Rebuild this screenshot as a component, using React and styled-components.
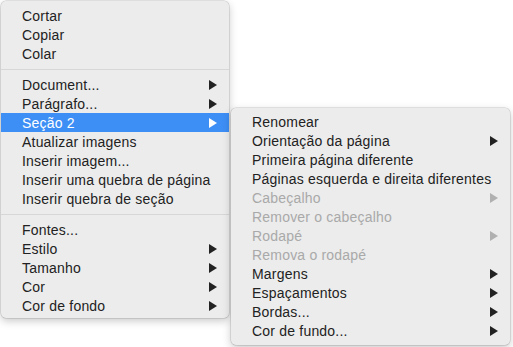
import React from "react";
import styled, { createGlobalStyle } from "styled-components";

const Global = createGlobalStyle`
  html, body { margin: 0; padding: 0; background: #ffffff; }
  body { font-family: "Liberation Sans", Arial, sans-serif; }
`;

const Stage = styled.div`
  display: flex;
  align-items: flex-start;
  gap: 2px;
  padding: 1px 0 0 1px;
  width: 513px;
  height: 347px;
  box-sizing: border-box;
  overflow: hidden;
`;

const Menu = styled.div`
  position: relative;
  z-index: ${(p) => (p.$sub ? 2 : 1)};
  width: ${(p) => p.$w}px;
  margin-top: ${(p) => p.$top || 0}px;
  padding: ${(p) => p.$pt}px 0 ${(p) => p.$pb}px;
  box-sizing: border-box;
  background: #ececec;
  border-radius: 5px;
  box-shadow: 0 0 0 0.5px rgba(0, 0, 0, 0.18), 0 3px 9px rgba(0, 0, 0, 0.22);
`;

const Item = styled.div`
  display: flex;
  align-items: center;
  justify-content: space-between;
  height: 19px;
  padding: 0 12px 0 21px;
  font-size: 14px;
  letter-spacing: 0.2px;
  line-height: 18px;
  white-space: nowrap;
  color: ${(p) => (p.$active ? "#ffffff" : p.$disabled ? "#a9a9a9" : "#222222")};
  background: ${(p) => (p.$active ? "#3d8ef5" : "transparent")};
`;

const Separator = styled.div`
  height: 1px;
  margin: 6px 0 5px;
  background: #d7d7d7;
`;

const Arrow = ({ color }) => (
  <svg width="8" height="10" viewBox="0 0 8 10">
    <polygon points="0,0 8,5 0,10" fill={color} />
  </svg>
);

const main = [
  ["Cortar"],
  ["Copiar"],
  ["Colar"],
  "sep",
  ["Document...", true],
  ["Parágrafo...", true],
  ["Seção 2", true, "active"],
  ["Atualizar imagens"],
  ["Inserir imagem..."],
  ["Inserir uma quebra de página"],
  ["Inserir quebra de seção"],
  "sep",
  ["Fontes..."],
  ["Estilo", true],
  ["Tamanho", true],
  ["Cor", true],
  ["Cor de fondo", true],
];

const sub = [
  ["Renomear"],
  ["Orientação da página", true],
  ["Primeira página diferente"],
  ["Páginas esquerda e direita diferentes"],
  ["Cabeçalho", true, "disabled"],
  ["Remover o cabeçalho", false, "disabled"],
  ["Rodapé", true, "disabled"],
  ["Remova o rodapé", false, "disabled"],
  ["Margens", true],
  ["Espaçamentos", true],
  ["Bordas...", true],
  ["Cor de fundo...", true],
];

const renderItems = (items) =>
  items.map((it, i) => {
    if (it === "sep") return <Separator key={i} />;
    const [label, hasArrow, state] = it;
    const active = state === "active";
    const disabled = state === "disabled";
    const arrowColor = active ? "#ffffff" : disabled ? "#b0b0b0" : "#222222";
    return (
      <Item key={i} $active={active} $disabled={disabled}>
        <span>{label}</span>
        {hasArrow && <Arrow color={arrowColor} />}
      </Item>
    );
  });

export default function App() {
  return (
    <>
      <Global />
      <Stage>
        <Menu $w={228} $pt={5} $pb={3}>{renderItems(main)}</Menu>
        <Menu $sub $w={279} $top={107} $pt={4} $pb={5}>{renderItems(sub)}</Menu>
      </Stage>
    </>
  );
}
